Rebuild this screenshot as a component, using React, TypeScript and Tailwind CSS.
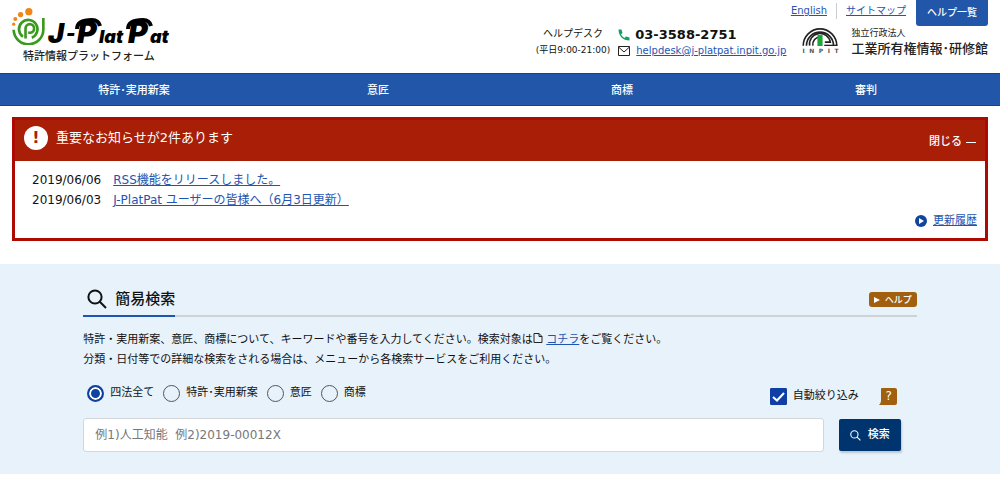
import * as React from 'react';

// ---------------------------------------------------------------------------
// Data
// ---------------------------------------------------------------------------

const NAV_ITEMS = ['特許･実用新案', '意匠', '商標', '審判'];

const NOTICES = [
  { date: '2019/06/06', title: 'RSS機能をリリースしました。' },
  { date: '2019/06/03', title: 'J-PlatPat ユーザーの皆様へ（6月3日更新）' },
];

const TARGETS = [
  { value: 'all', label: '四法全て' },
  { value: 'patent', label: '特許･実用新案' },
  { value: 'design', label: '意匠' },
  { value: 'trademark', label: '商標' },
];

// ---------------------------------------------------------------------------
// Icons and logos
// ---------------------------------------------------------------------------

function SwirlMark() {
  return (
    <svg viewBox="0 0 100 112" className="h-[37px] w-[33px]" fill="none" aria-hidden="true">
      <g fill="#f08519">
        <circle cx="51" cy="11" r="11" />
        <circle cx="26" cy="20" r="8" />
        <circle cx="10" cy="33" r="6" />
        <circle cx="5" cy="49" r="5" />
      </g>
      <g stroke="#3a9a1f" strokeWidth="8">
        <path d="M95 30V64A45 45 0 0 1 5 66" />
        <path d="M33 87A28 28 0 1 1 60 90" />
        <path d="M41 92V62A13 13 0 1 1 54 75H49" />
      </g>
    </svg>
  );
}

function WordMark() {
  return (
    <svg
      viewBox="-2 -6 128 43"
      className="h-[43px] w-32 font-['Inter',sans-serif] font-black italic"
      role="img"
      aria-label="J-PlatPat"
    >
      <g fill="#000">
        <text x="0" y="29" fontSize="27">J</text>
        <text x="18" y="26" fontSize="20">-</text>
        <text x="29" y="29" fontSize="30">P</text>
        <text x="51" y="29" fontSize="18">lat</text>
        <text x="80" y="29" fontSize="30">P</text>
        <text x="102" y="29" fontSize="18">at</text>
      </g>
      {/* hooks over the two capitals */}
      <g fill="none" stroke="#000" strokeWidth="4">
        <path d="M29 15C29 8 35 6 44 6C48 6 51 8 52 12" />
        <path d="M80 15C80 8 86 6 95 6C99 6 102 8 103 12" />
      </g>
    </svg>
  );
}

function InpitMark() {
  return (
    <svg viewBox="0 0 110 62" className="h-5 w-9" fill="none" aria-hidden="true">
      <g stroke="#222" strokeWidth="5">
        <path d="M3 61A52 52 0 0 1 107 61" />
        <path d="M13 61A42 42 0 0 1 97 61" />
        <path d="M23 61A32 32 0 0 1 87 50H70" />
        <path d="M33 61A23 23 0 0 1 56 34" />
      </g>
      <path d="M68 60H109" stroke="#222" strokeWidth="4" />
      <path d="M47 28H63V62H47Z" fill="#1fa638" />
    </svg>
  );
}

function PhoneIcon() {
  return (
    <svg viewBox="0 0 24 24" className="size-3" fill="#12a063" aria-hidden="true">
      <path d="M1 1H7L9 8L6 11C8 14 10 16 13 18L16 15L23 17V23C10 23 1 14 1 1Z" />
    </svg>
  );
}

function MailIcon() {
  return (
    <svg viewBox="0 0 24 20" className="h-[10px] w-3" fill="none" stroke="#222" strokeWidth="2" aria-hidden="true">
      <path d="M1 1H23V19H1ZM1 2L12 12L23 2" />
    </svg>
  );
}

function SearchIcon({ className, strokeWidth }: { className: string; strokeWidth: number }) {
  return (
    <svg viewBox="0 0 20 20" className={className} fill="none" stroke="currentColor" strokeWidth={strokeWidth} aria-hidden="true">
      <circle cx="8" cy="8" r="6.6" />
      <path d="M12.8 12.8L19 19" />
    </svg>
  );
}

function PlayCircleIcon() {
  return (
    <svg viewBox="0 0 24 24" className="size-3" aria-hidden="true">
      <circle cx="12" cy="12" r="12" fill="#0f459f" />
      <path d="M8 6L18 12L8 18Z" fill="#fff" />
    </svg>
  );
}

function FileIcon() {
  return (
    <svg viewBox="0 0 20 20" className="inline size-[10px] align-baseline" fill="none" stroke="#222" strokeWidth="2" aria-hidden="true">
      <path d="M2 1H12L18 7V19H2ZM12 1V7H18" />
    </svg>
  );
}

// ---------------------------------------------------------------------------
// Header
// ---------------------------------------------------------------------------

function Header() {
  return (
    <header className="flex h-[73px] items-start justify-between px-3">
      <a href="#top" className="block pt-2 text-[#222]">
        <span className="flex items-start gap-px">
          <SwirlMark />
          <WordMark />
        </span>
        <span className="block pl-[11px] text-[11px] leading-3 font-medium">特許情報プラットフォーム</span>
      </a>

      <div className="flex flex-col items-end">
        <div className="flex items-start text-[10px] leading-[22px]">
          <a href="#en" className="text-[#1f55b0] underline">English</a>
          <a href="#sitemap" className="ml-[9px] mt-[3px] border-l border-[#c8ccd4] pl-[9px] leading-4 text-[#1f55b0] underline">
            サイトマップ
          </a>
          <button className="ml-[10px] h-[26px] rounded-b-[3px] bg-[#2156a8] px-[11px] font-medium text-white">
            ヘルプ一覧
          </button>
        </div>
        <div className="flex items-start">
          <div className="text-center">
            <p className="text-[10px] leading-4">ヘルプデスク</p>
            <p className="text-[9px] leading-4">(平日9:00-21:00)</p>
          </div>
          <div className="ml-2">
            <p className="flex items-center gap-[5px] text-[13px] leading-[18px] font-bold">
              <PhoneIcon />
              03-3588-2751
            </p>
            <p className="flex items-center gap-[6px] text-[10px] leading-[14px]">
              <MailIcon />
              <a href="mailto:helpdesk@j-platpat.inpit.go.jp" className="text-[#1f55b0] underline">
                helpdesk@j-platpat.inpit.go.jp
              </a>
            </p>
          </div>
          <a href="#inpit" className="ml-4 flex gap-[13px] text-[#222]">
            <span className="flex flex-col items-center">
              <InpitMark />
              <span className="flex w-9 justify-between text-[6px] leading-[10px] font-bold text-[#555]">
                <span>I</span>
                <span>N</span>
                <span>P</span>
                <span>I</span>
                <span>T</span>
              </span>
            </span>
            <span>
              <span className="block text-[9px] leading-[14px]">独立行政法人</span>
              <span className="block text-[13px] leading-[18px] font-medium">工業所有権情報･研修館</span>
            </span>
          </a>
        </div>
      </div>
    </header>
  );
}

// ---------------------------------------------------------------------------
// Notice panel
// ---------------------------------------------------------------------------

function NoticePanel() {
  return (
    <section className="mx-3 mt-[11px] border-[3px] border-[#ae0a04]">
      <div className="flex h-[41px] items-start justify-between bg-[#a81e06] px-[9px] pt-[6px] text-white">
        <h2 className="flex items-center gap-2 text-[13px] leading-6">
          <span className="flex size-6 items-center justify-center rounded-full bg-white text-[16px] font-bold text-[#a81e06]">
            !
          </span>
          重要なお知らせが2件あります
        </h2>
        <button className="flex items-center gap-1 pt-[6px] text-[11px] leading-5 font-medium">
          閉じる
          <span className="h-px w-[10px] bg-white" />
        </button>
      </div>
      <div className="px-[17px] pt-[9px]">
        <ul>
          {NOTICES.map((notice) => (
            <li key={notice.date} className="flex gap-3 text-[12px] leading-5">
              <time>{notice.date}</time>
              <a href="#notice" className="text-[#1f55b0] underline">
                {notice.title}
              </a>
            </li>
          ))}
        </ul>
      </div>
      <div className="flex items-center justify-end gap-[6px] px-2 pt-px pb-[7px]">
        <PlayCircleIcon />
        <a href="#history" className="text-[11px] leading-5 text-[#1f55b0] underline">
          更新履歴
        </a>
      </div>
    </section>
  );
}

// ---------------------------------------------------------------------------
// Simple search
// ---------------------------------------------------------------------------

function SimpleSearch() {
  const [target, setTarget] = React.useState('all');
  const [autoNarrow, setAutoNarrow] = React.useState(true);
  const [keyword, setKeyword] = React.useState('');

  return (
    <section className="mt-[23px] bg-[#e8f2fb] pt-[18px] pb-[22px]">
      <form className="mx-auto w-10/12" onSubmit={(e) => e.preventDefault()}>
        <div className="flex h-[35px] items-start justify-between border-b-2 border-[#cfd1d4]">
          <h1 className="flex h-[35px] items-center gap-2 border-b-2 border-[#1f55b0] pl-1 text-[15px] leading-6 font-medium">
            <SearchIcon className="size-5" strokeWidth={2} />
            簡易検索
          </h1>
          <button
            type="button"
            className="mt-[10px] flex h-[15px] items-center gap-[5px] rounded-[3px] bg-[#a0600f] px-[5px] text-[9px] leading-3 font-medium text-white"
          >
            <svg viewBox="0 0 6 6" className="size-[6px]" fill="currentColor" aria-hidden="true">
              <path d="M0 0L6 3L0 6Z" />
            </svg>
            ヘルプ
          </button>
        </div>

        <p className="mt-[13px] text-[11px] leading-5">
          特許・実用新案、意匠、商標について、キーワードや番号を入力してください。検索対象は
          <FileIcon />{' '}
          <a href="#target" className="text-[#1f55b0] underline">コチラ</a>
          をご覧ください。
          <br />
          分類・日付等での詳細な検索をされる場合は、メニューから各検索サービスをご利用ください。
        </p>

        <div className="mt-[13px] flex items-start justify-between pr-5">
          <div className="flex gap-[9px] pl-1">
            {TARGETS.map((t) => (
              <label key={t.value} className="flex items-center gap-[6px] text-[11px] leading-5">
                <input
                  type="radio"
                  name="target"
                  value={t.value}
                  checked={target === t.value}
                  onChange={() => setTarget(t.value)}
                  className="size-[17px] appearance-none rounded-full border border-[#555] checked:border-2 checked:border-[#0f3fa6] checked:bg-[#0f459f] checked:shadow-[inset_0_0_0_2px_#fff]"
                />
                {t.label}
              </label>
            ))}
          </div>
          <div className="flex items-center gap-5 pt-[3px]">
            <label className="flex items-center gap-[6px] text-[11px] leading-5">
              <span className="relative flex size-[17px]">
                <input
                  type="checkbox"
                  checked={autoNarrow}
                  onChange={(e) => setAutoNarrow(e.target.checked)}
                  className="peer size-[17px] appearance-none rounded-[1px] border border-[#666] bg-white checked:border-[#0f3fa6] checked:bg-[#0f3fa6]"
                />
                <svg
                  viewBox="0 0 17 17"
                  className="pointer-events-none absolute inset-0 hidden peer-checked:block"
                  fill="none"
                  stroke="#fff"
                  strokeWidth="2"
                  aria-hidden="true"
                >
                  <path d="M3 9L7 12.5L14 5" />
                </svg>
              </span>
              自動絞り込み
            </label>
            <button type="button" aria-label="自動絞り込みのヘルプ" className="relative h-[17px] w-[18px]">
              <svg viewBox="0 0 18 17" className="absolute inset-0" aria-hidden="true">
                <path d="M3 0H16Q18 0 18 2V15Q18 17 16 17H0Q2 15 2 13V1Q2 0 3 0Z" fill="#a0600f" />
              </svg>
              <span className="relative block pl-[2px] text-[12px] leading-[17px] font-medium text-white">?</span>
            </button>
          </div>
        </div>

        <div className="mt-3 flex items-start gap-[15px] pr-4">
          <input
            type="text"
            aria-label="キーワード"
            value={keyword}
            onChange={(e) => setKeyword(e.target.value)}
            placeholder="例1)人工知能  例2)2019-00012X"
            className="h-[34px] min-w-0 flex-1 rounded-[3px] border border-[#d3d6da] bg-white px-[11px] text-[12px] placeholder:text-[#777] placeholder:opacity-100"
          />
          <button
            type="submit"
            className="mt-px flex h-8 w-[62px] items-center justify-center gap-[7px] rounded-[2px] bg-[#00346f] text-[11px] font-medium text-white shadow-[1px_2px_2px_#b9c6d6]"
          >
            <SearchIcon className="size-[11px]" strokeWidth={2} />
            検索
          </button>
        </div>
      </form>
    </section>
  );
}

// ---------------------------------------------------------------------------
// App
// ---------------------------------------------------------------------------

export default function App() {
  return (
    <div id="top" className="bg-white font-['DejaVu_Sans','Noto_Sans_CJK_JP',sans-serif] text-[#111]">
      <Header />
      <nav className="border-y border-[#0b45a0] bg-[#2156a8] px-3">
        <ul className="grid grid-cols-4 pt-[2px] text-center text-[11px] leading-[29px] font-medium text-white">
          {NAV_ITEMS.map((item) => (
            <li key={item}>
              <a href="#menu" className="block">{item}</a>
            </li>
          ))}
        </ul>
      </nav>
      <main>
        <NoticePanel />
        <SimpleSearch />
      </main>
    </div>
  );
}
